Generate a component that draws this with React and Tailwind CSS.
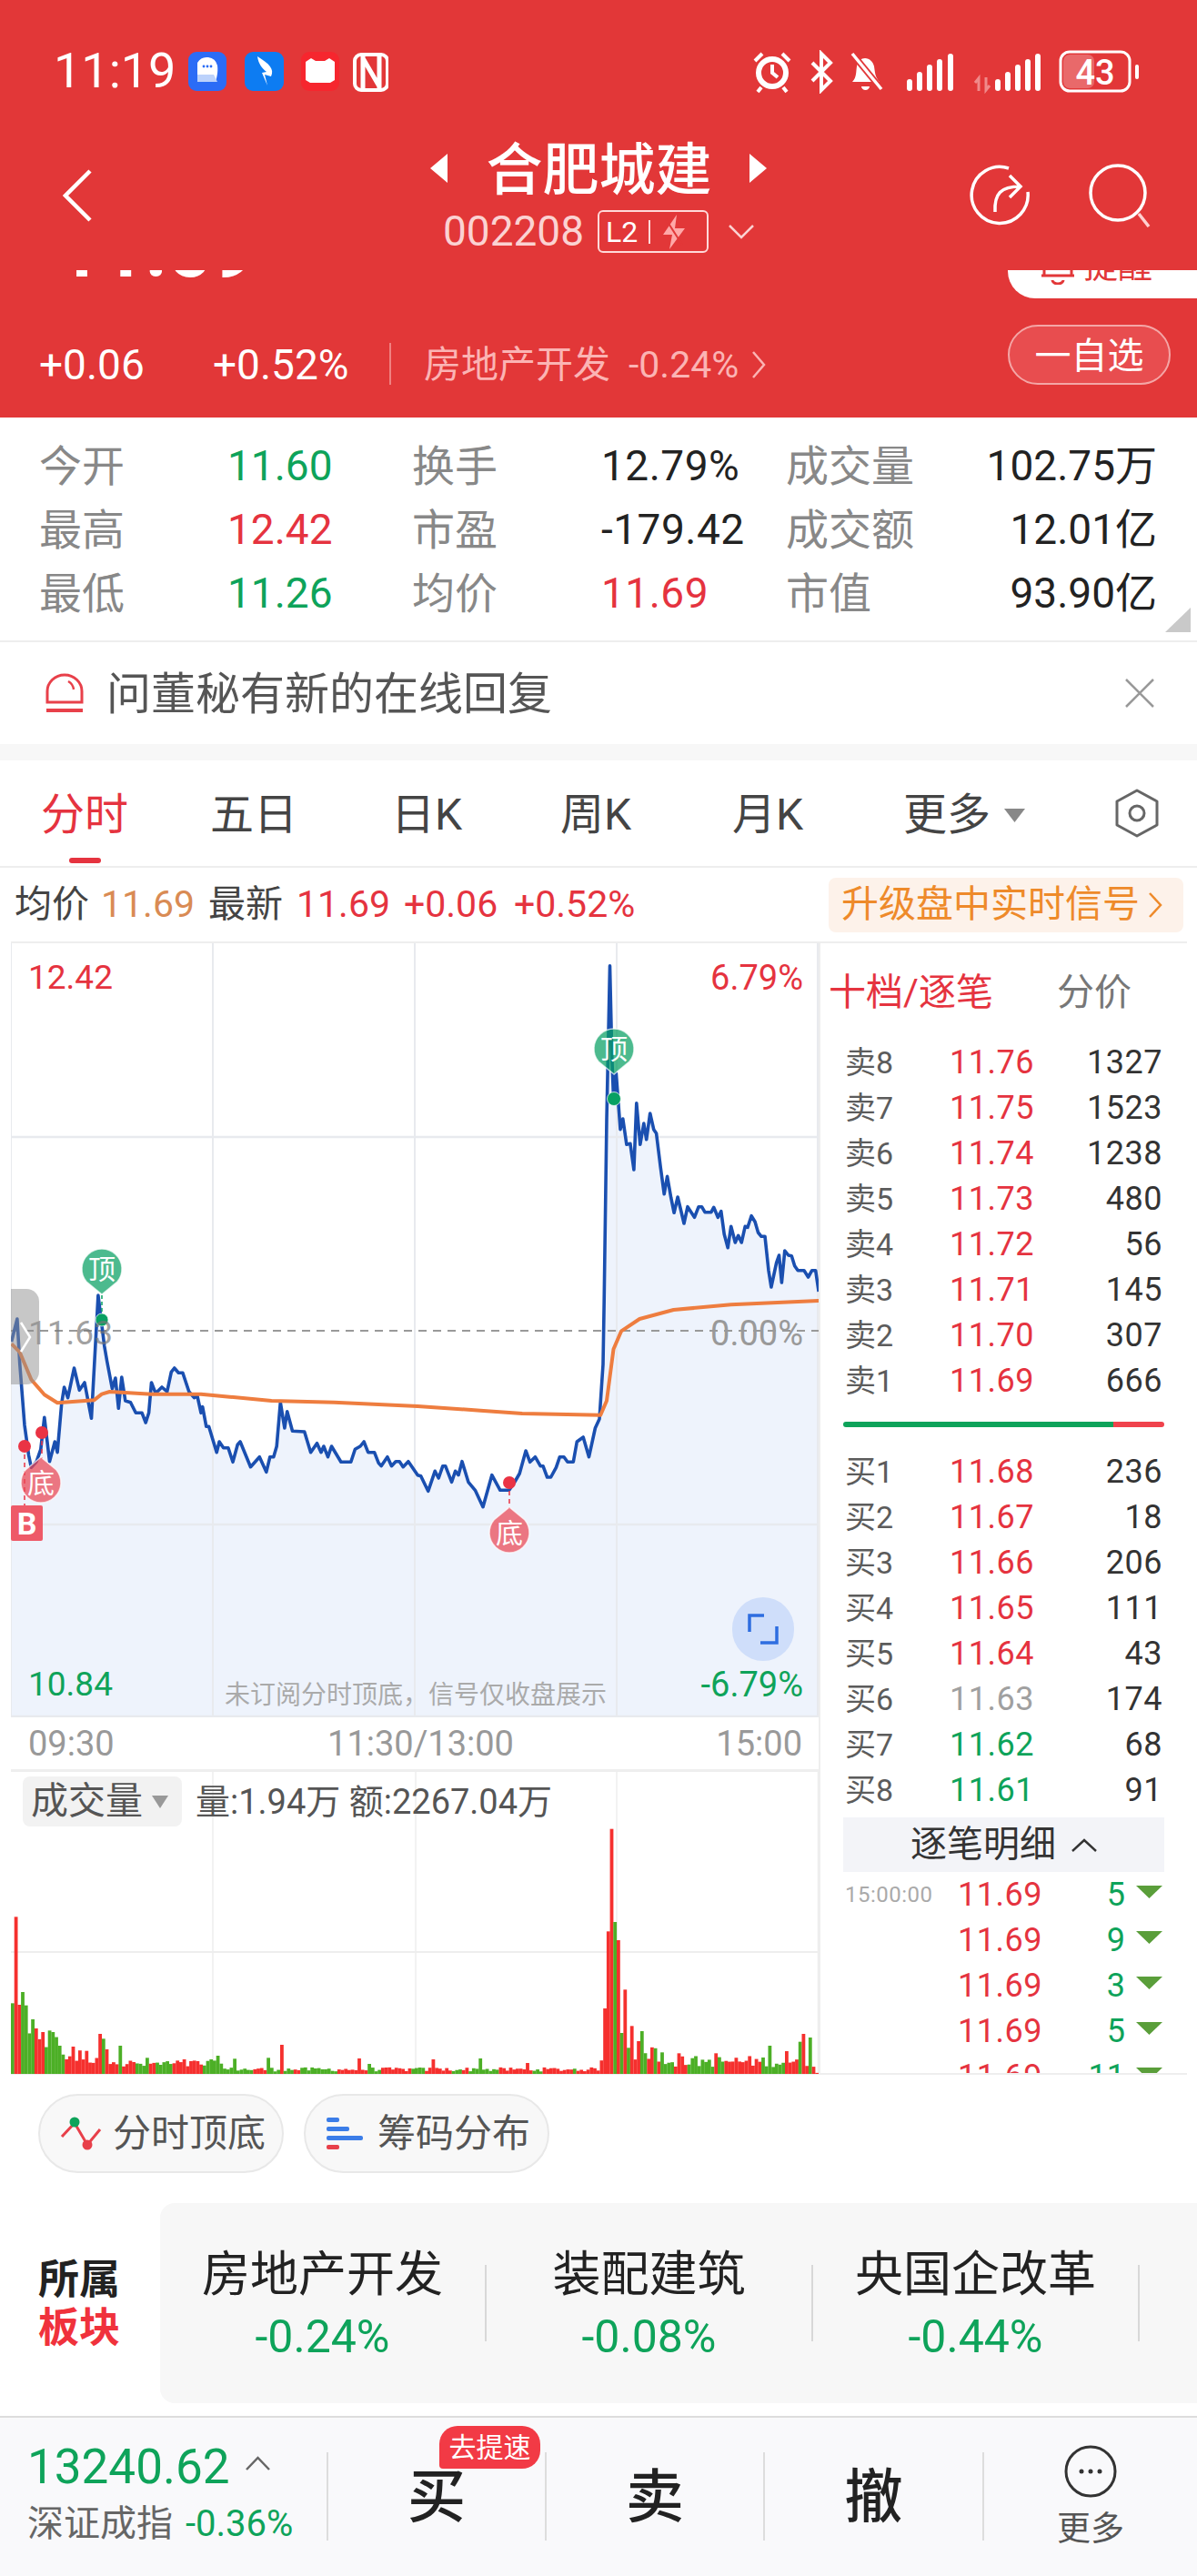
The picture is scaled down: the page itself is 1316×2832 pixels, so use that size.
import React from "react";

const z4 = [[22,225],[33,150],[38,300],[47,500],[55,600],[60,640],[70,620],[78,580],[85,475],[95,620],[105,555],[110,590],[118,430],[123,375],[130,410],[142,312],[152,385],[162,360],[175,478],[188,72],[200,240],[205,290],[215,380],[221,345],[227,445],[233,342],[240,420],[250,425],[260,460],[272,460],[279,492],[285,460],[290,360],[298,395],[310,375],[320,390],[328,325],[334,312],[342,328],[350,328],[362,390],[372,410],[378,405],[385,460],[388,440],[395,505],[400,505],[415,590],[420,555],[428,575],[437,575],[446,622],[455,565],[460,555],[480,638],[497,605],[510,655],[517,605],[524,605],[530,570],[537,425],[545,510],[550,455],[560,520],[583,522],[595,590],[607,560],[615,590],[620,570],[628,605],[635,570],[653,622],[672,622],[680,580],[690,570],[697,555],[705,590],[717,590],[725,625],[730,635],[742,605],[750,635],[758,620],[765,620],[772,638],[782,620],[800,665],[806,668],[820,718],[833,652],[840,675],[848,635],[853,635],[865,688],[872,652],[878,665],[885,620],[897,688],[910,715],[925,770],[942,665],[958,715],[975,715],[985,690],[995,660],[1007,585],[1015,622],[1025,605],[1035,635],[1040,635],[1048,672],[1055,672],[1065,640],[1072,605],[1080,605],[1087,622],[1098,622],[1105,555],[1117,540],[1128,605],[1140,510],[1148,480],[1155,300]];
const z3 = [[1157,1200],[1162,600],[1168,95],[1172,400],[1175,530],[1180,450],[1188,635],[1193,600],[1200,685],[1207,682],[1214,768],[1219,548],[1226,685],[1233,615],[1238,668],[1245,582],[1252,635],[1257,648],[1265,760],[1272,848],[1278,790],[1285,860],[1291,910],[1298,858],[1310,945],[1317,890],[1330,925],[1338,890],[1344,890],[1350,908],[1362,908],[1367,892],[1375,925],[1381,905],[1387,980],[1394,1025],[1400,955],[1408,1008],[1414,985],[1420,1008],[1427,955],[1432,958],[1439,920],[1446,940],[1452,975],[1458,988],[1465,988],[1472,1100],[1477,1155],[1487,1075],[1492,1050],[1497,1140],[1503,1035],[1510,1050],[1516,1052],[1522,1085],[1528,1100],[1540,1100],[1548,1122],[1555,1100],[1562,1100],[1568,1170]];
const avgZ = [[22,232],[38,260],[60,350],[85,400],[110,427],[180,418],[195,398],[210,390],[290,398],[385,398],[440,407],[520,420],[640,425],[800,438],[920,452],[1000,462],[1150,467],[1162,420],[1175,250],[1190,190],[1225,150],[1290,120],[1400,103],[1568,90]];
const fromZ4 = ([x, y]) => [+(x / 1.742).toFixed(1), +(1400 + y / 3).toFixed(1)];
const fromZ3 = ([x, y]) => [+(x / 1.742).toFixed(1), +(1030 + y / 3).toFixed(1)];
const price = [...z4.map(fromZ4), ...z3.map(fromZ3)];
const avg = avgZ.map(fromZ4);
const pts = (a) => a.map((p) => p.join(",")).join(" ");

const peaks = [[20,905,0],[27,620,1],[32,910,1],[40,868,0],[47,912,0],[58,958,0],[65,988,1],[77,1000,1],[92,995,0],[97,1000,0],[110,1045,0],[136,1048,1],[185,1006,1],[193,1022,0],[223,1045,0],[275,1085,0],[345,1090,1],[410,1078,0],[440,1088,0],[505,1085,0],[530,1042,1],[677,1087,1],[695,1105,0],[905,1087,0],[818,1090,1],[995,1102,1],[1143,922,1],[1150,668,1],[1156,330,1],[1162,637,0],[1168,697,1],[1175,1003,0],[1180,860,1],[1187,1052,0],[1194,980,1],[1205,1030,1],[1212,997,0],[1232,1057,1],[1250,1067,0],[1283,1070,1],[1352,1070,1],[1456,1045,0],[1485,1063,1],[1512,1032,0],[1519,1006,1],[1531,1018,0],[1551,888,0]];
function makeBars() {
  let s = 12345;
  const rnd = () => { s = (s * 1103515245 + 12345) & 0x7fffffff; return s / 0x7fffffff; };
  const bars = [];
  let color = 1;
  for (let i = 0; i < 240; i++) {
    const x = 12 + i * 3.7;
    const zx = x * 1.723;
    let env = 18;
    if (zx < 60) env = 190; else if (zx < 120) env = 110; else if (zx < 230) env = 70; else if (zx < 420) env = 40; else if (zx < 1130) env = 18; else if (zx < 1240) env = 90; else if (zx < 1540) env = 50; else env = 4;
    if (rnd() < 0.22) color = 1 - color;
    let h = env * (0.45 + rnd() * 0.75);
    let c = color;
    for (const [px, top, col] of peaks) {
      if (Math.abs(px - zx) < 3.2) { h = Math.max(h, 1138 - top); c = col; }
    }
    bars.push({ x, h: h / 3, c });
  }
  return bars;
}
const bars = makeBars();

const Drop = ({ x, y, up, label }) => {
  const d = up
    ? `M${x} ${y - 28} L${x - 17} ${y - 14} A22 22 0 1 0 ${x + 17} ${y - 14} Z`
    : `M${x} ${y + 28} L${x - 17} ${y + 14} A22 22 0 1 1 ${x + 17} ${y + 14} Z`;
  return (
    <g>
      <path d={d} fill={up ? "#ea4553" : "#07a062"} fillOpacity="0.72" stroke="#ffffff" strokeOpacity="0.7" strokeWidth="1.5" />
      <text x={x} y={y + 11} textAnchor="middle" fontSize="30" fill="#ffffff">{label}</text>
    </g>
  );
};

const sells = [["卖8","11.76","1327"],["卖7","11.75","1523"],["卖6","11.74","1238"],["卖5","11.73","480"],["卖4","11.72","56"],["卖3","11.71","145"],["卖2","11.70","307"],["卖1","11.69","666"]];
const buys = [["买1","11.68","236","text-[#e5333f]"],["买2","11.67","18","text-[#e5333f]"],["买3","11.66","206","text-[#e5333f]"],["买4","11.65","111","text-[#e5333f]"],["买5","11.64","43","text-[#e5333f]"],["买6","11.63","174","text-[#a0a0a0]"],["买7","11.62","68","text-[#0ea35a]"],["买8","11.61","91","text-[#0ea35a]"]];
const ticks = [["15:00:00","5"],["","9"],["","3"],["","5"],["","11"]];

const Level = ({ label, p, q, cls }) => (
  <div className="flex h-[50px] items-center">
    <div className="w-[117px] pl-[2px] text-[34px] text-[#5c5c5c]">{label}</div>
    <div className={`w-[100px] text-[36px] tracking-[0.5px] ${cls}`}>{p}</div>
    <div className="flex-1 pr-[2px] text-right text-[36px] tracking-[0.5px] text-[#333]">{q}</div>
  </div>
);

const StatRow = ({ a, av, ac, b, bv, bc, c, cv }) => (
  <div className="grid h-[70px] grid-cols-[207px_203px_208px_203px_408px] items-center text-[46px] leading-none">
    <div className="text-[47px] text-[#888]">{a}</div>
    <div className={ac}>{av}</div>
    <div className="text-[47px] text-[#888]">{b}</div>
    <div className={`tracking-[0.5px] ${bc}`}>{bv}</div>
    <div className="flex items-center justify-between">
      <span className="text-[47px] text-[#888]">{c}</span>
      <span className="text-[#222]">{cv}</span>
    </div>
  </div>
);

const Sector = ({ name, pct }) => (
  <>
    <div className="flex w-[357px] flex-col items-center pt-[6px]">
      <div className="h-[60px] text-[53px] leading-[60px] text-[#222]">{name}</div>
      <div className="mt-[8px] h-[60px] text-[50px] leading-[60px] text-[#0ea35a]">{pct}</div>
    </div>
    <div className="h-[84px] w-[2px] bg-[#d8d8d8]" />
  </>
);

const Sep = () => <div className="mt-[38px] h-[97px] w-[2px] shrink-0 bg-[#dddddd]" />;

export default function App() {
  return (
    <div className="h-[2832px] w-[1316px] overflow-hidden bg-white font-['Roboto','Noto_Sans_CJK_SC',sans-serif]">
      {/* red header */}
      <div className="h-[459px] bg-[#e23738] text-white">
        <div className="flex h-[150px] items-start pt-[55px]">
          <div className="ml-[59px] h-[46px] w-[148px] text-[54px] leading-[46px]">11:19</div>
          <svg width="220" height="46" viewBox="207 55 220 46" className="shrink-0">
            <rect x="207" y="57" width="42" height="43" rx="9" fill="#2b6cf6" />
            <path d="M217 69 a12 12 0 0 1 22 3 c1 8 -1 14 -2 18 h-20 z" fill="#ffffff" />
            <path d="M217 82 h18 l4 8 h-22 z" fill="#bcd2fb" />
            <circle cx="224" cy="73" r="1.4" fill="#2b6cf6" /><circle cx="228" cy="73" r="1.4" fill="#2b6cf6" /><circle cx="232" cy="73" r="1.4" fill="#2b6cf6" />
            <rect x="269" y="57" width="43" height="43" rx="9" fill="#0d7cf2" />
            <path d="M283 62 C296 70 302 76 298 84 L291 82 L294 94 L288 80 L293 79 C288 75 284 70 283 62 Z" fill="#ffffff" />
            <rect x="331" y="57" width="42" height="43" rx="9" fill="#f6262e" />
            <path d="M336 68 l6 -4 l5 3 h10 l5 -3 l6 4 v20 l-5 3 h-22 l-5 -3 z" fill="#ffffff" />
            <rect x="390" y="60" width="36" height="39" rx="7" fill="none" stroke="#ffffff" strokeWidth="4" />
            <path d="M399 62 v35 M417 62 v35 M399 64 L417 95" stroke="#ffffff" strokeWidth="5" fill="none" />
          </svg>
          <svg width="426" height="48" viewBox="826 54 426 48" className="ml-[400px] shrink-0">
            <circle cx="848" cy="79" r="15" fill="none" stroke="#ffffff" strokeWidth="6" />
            <path d="M829 66 l8 -8 M867 66 l-8 -8 M836 95 l-4 5 M860 95 l4 5 M848 70 v9 l6 5" stroke="#ffffff" strokeWidth="4" fill="none" />
            <path d="M892 68 L912 88 L902 98 V58 L912 68 L892 88" stroke="#ffffff" strokeWidth="4" fill="none" />
            <path d="M936 89 c5 -5 4 -12 5 -17 c1 -6 5 -9 9 -9 c5 0 9 4 10 9 c1 6 1 12 6 17 z" fill="#ffffff" />
            <path d="M936 58 L968 97" stroke="#e23738" strokeWidth="7" /><path d="M936 58 L968 97" stroke="#ffffff" strokeWidth="3.5" />
            <path d="M946 94 h9 a4.5 4 0 0 1 -9 0z" fill="#ffffff" />
            {[[999,86],[1010,78],[1021,70],[1032,64],[1044,58]].map(([x, y]) => <rect key={x} x={x - 3} y={y} width="6" height={99 - y} rx="3" fill="#ffffff" />)}
            {[[1096,86],[1107,78],[1118,70],[1129,64],[1140,58]].map(([x, y]) => <rect key={x} x={x - 3} y={y} width="6" height={99 - y} rx="3" fill="#ffffff" />)}
            <path d="M1075 99 v-14 l-4 5 M1083 84 v14 l4 -5" stroke="#f08a8a" strokeWidth="3" fill="none" />
            <rect x="1165" y="56" width="76" height="43" rx="10" fill="none" stroke="#ffffff" strokeWidth="3" />
            <rect x="1168" y="59" width="34" height="37" rx="7" fill="#ffffff" fillOpacity="0.25" />
            <text x="1203" y="92" textAnchor="middle" fontSize="38" fontWeight="500" fill="#ffffff">43</text>
            <rect x="1247" y="70" width="4" height="16" rx="2" fill="#ffffff" />
          </svg>
        </div>
        <div className="flex h-[130px] items-start">
          <div className="w-[300px] shrink-0 pl-[69px] pt-[36px]">
            <svg width="32" height="58" viewBox="0 0 32 58"><path d="M30 2 L3 29 L30 56" fill="none" stroke="#ffffff" strokeWidth="4.5" /></svg>
          </div>
          <div className="flex flex-1 flex-col items-center pt-[7px]">
            <div className="flex h-[56px] items-center">
              <svg width="20" height="32" viewBox="0 0 20 32" className="mr-[41px]"><path d="M19 0 L0 16 L19 32 Z" fill="#ffffff" /></svg>
              <div className="pt-[5px] text-[62px] font-medium leading-[56px]">合肥城建</div>
              <svg width="20" height="32" viewBox="0 0 20 32" className="ml-[40px]"><path d="M1 0 L20 16 L1 32 Z" fill="#ffffff" /></svg>
            </div>
            <div className="mt-[18px] flex h-[47px] items-center">
              <div className="text-[46px] leading-[47px] text-[#fbd2d2]">002208</div>
              <div className="ml-[15px] flex h-[47px] w-[122px] items-center rounded-[6px] border-2 border-[#ffd9d9] pl-[7px]">
                <span className="text-[32px] leading-none">L2</span>
                <span className="ml-[12px] h-[26px] w-[2px] bg-[#ffd9d9]" />
                <svg width="28" height="40" viewBox="0 0 28 40" className="ml-[12px]"><path d="M17 1 L2 23 H12 L9 39 L26 16 H15 Z" fill="#ffa8a8" /><path d="M5 6 L23 34" stroke="#e23738" strokeWidth="2" /></svg>
              </div>
              <svg width="28" height="16" viewBox="0 0 28 16" className="ml-[22px]"><path d="M1 1 L14 14 L27 1" fill="none" stroke="#fbd2d2" strokeWidth="2.5" /></svg>
            </div>
          </div>
          <div className="flex w-[300px] shrink-0 pl-[49px] pt-[30px]">
            <svg width="68" height="68" viewBox="1065 181 68 68" className="shrink-0">
              <path d="M1109 186 A31 31 0 1 0 1130 212" fill="none" stroke="#ffffff" strokeWidth="3.5" />
              <path d="M1094 234 C1093 214 1100 206 1122 206 M1110 194 L1122 206 L1110 218" fill="none" stroke="#ffffff" strokeWidth="3.5" />
            </svg>
            <svg width="68" height="70" viewBox="1197 179 68 70" className="ml-[64px] shrink-0">
              <circle cx="1229" cy="211" r="30" fill="none" stroke="#ffffff" strokeWidth="3.5" />
              <path d="M1252 234 L1263 248" stroke="#ffd0d0" strokeWidth="3.5" />
            </svg>
          </div>
        </div>
        <div className="mt-[17px] flex h-[31px] items-start justify-between pl-[63px]">
          <div className="h-[11px] overflow-hidden">
            <div className="-mt-[63px] text-[84px] font-bold leading-[84px] text-white">11.69</div>
          </div>
          <div className="flex h-[31px] w-[208px] justify-end overflow-hidden rounded-bl-[30px] bg-white pr-[49px] text-[#e23738]">
            <svg width="36" height="16" viewBox="0 0 36 16" className="mr-[10px]"><path d="M3 0 v6 H33 V0 M0 6 H36 M12 11 a6 4 0 0 0 12 0" fill="none" stroke="#e23738" strokeWidth="3" /></svg>
            <div className="-mt-[24px] text-[38px] leading-[38px]">提醒</div>
          </div>
        </div>
        <div className="mt-[29px] flex h-[66px] items-start">
          <div className="ml-[43px] mt-[21px] flex h-[46px] w-[191px] items-center text-[46px] leading-none">+0.06</div>
          <div className="mt-[21px] flex h-[46px] w-[194px] items-center text-[46px] leading-none">+0.52%</div>
          <div className="mt-[20px] h-[46px] w-[2px] bg-[#f08080]" />
          <div className="ml-[36px] mt-[21px] flex h-[46px] items-center text-[41px] leading-none text-[#fbb4b4]">
            房地产开发
            <span className="ml-[20px] text-[41px]">-0.24%</span>
            <svg width="16" height="32" viewBox="0 0 16 32" className="ml-[14px]"><path d="M2 2 L14 16 L2 30" fill="none" stroke="#fbb4b4" strokeWidth="2.5" /></svg>
          </div>
          <div className="ml-auto mr-[29px] flex h-[66px] w-[179px] items-center justify-center rounded-full border-2 border-[#f4a6a6] bg-[#e84d4f] pt-[4px] text-[40px] leading-none">一自选</div>
        </div>
      </div>

      {/* stats */}
      <div className="relative h-[247px] border-b-2 border-[#eeeeee] pl-[43px] pt-[18px]">
        <StatRow a="今开" av="11.60" ac="text-[#0ea35a]" b="换手" bv="12.79%" bc="text-[#222]" c="成交量" cv="102.75万" />
        <StatRow a="最高" av="12.42" ac="text-[#e5333f]" b="市盈" bv="-179.42" bc="text-[#222]" c="成交额" cv="12.01亿" />
        <StatRow a="最低" av="11.26" ac="text-[#0ea35a]" b="均价" bv="11.69" bc="text-[#e5333f]" c="市值" cv="93.90亿" />
        <svg width="28" height="27" viewBox="0 0 28 27" className="absolute bottom-[9px] right-[7px]"><path d="M28 0 V27 H0 Z" fill="#c9c9c9" /></svg>
      </div>

      {/* notification */}
      <div className="flex h-[112px] items-center pl-[49px]">
        <svg width="44" height="44" viewBox="0 0 44 44" className="shrink-0">
          <path d="M3 32 V20 A19 18 0 0 1 41 20 V32 Z" fill="none" stroke="#e8404a" strokeWidth="3" />
          <path d="M2 41 H42" stroke="#e8404a" strokeWidth="4" /><path d="M26 9 A12 12 0 0 1 32 18" fill="none" stroke="#e8404a" strokeWidth="2.5" />
        </svg>
        <div className="ml-[24px] pt-[2px] text-[49px] leading-none text-[#555]">问董秘有新的在线回复</div>
        <svg width="32" height="32" viewBox="0 0 32 32" className="ml-auto mr-[47px]"><path d="M1 1 L31 31 M31 1 L1 31" stroke="#999" strokeWidth="2.5" /></svg>
      </div>
      <div className="h-[18px] bg-[#f7f7f7]" />

      {/* tabs */}
      <div className="flex h-[118px] items-center border-b-2 border-[#eeeeee] pl-[45px] pt-[4px] text-[48px] leading-none text-[#444]">
        <div className="relative h-[48px] w-[186px] text-[#e5333f]">分时<span className="absolute left-[31px] top-[71px] h-[6px] w-[35px] rounded-[3px] bg-[#e5333f]" /></div>
        <div className="w-[199px]">五日</div>
        <div className="w-[186px]">日K</div>
        <div className="w-[189px]">周K</div>
        <div className="w-[188px]">月K</div>
        <div>更多</div>
        <svg width="23" height="15" viewBox="0 0 23 15" className="ml-[15px]"><path d="M0 0 H23 L11.5 15 Z" fill="#888" /></svg>
        <svg width="50" height="54" viewBox="0 0 50 54" className="-mt-[4px] ml-[98px]">
          <path d="M25 2 L47 14 V40 L25 52 L3 40 V14 Z" fill="none" stroke="#666" strokeWidth="3" strokeLinejoin="round" />
          <circle cx="25" cy="27" r="8" fill="none" stroke="#666" strokeWidth="3" />
        </svg>
      </div>

      {/* info row */}
      <div className="flex h-[81px] items-center pl-[16px] pr-[15px] text-[41px] leading-none">
        <span className="text-[#444]">均价</span>
        <span className="ml-[13px] w-[118px] text-[#d98b54]">11.69</span>
        <span className="text-[#444]">最新</span>
        <span className="ml-[15px] w-[118px] text-[#e5333f]">11.69</span>
        <span className="w-[121px] text-[#e5333f]">+0.06</span>
        <span className="text-[#e5333f]">+0.52%</span>
        <div className="ml-auto flex h-[60px] w-[390px] items-center rounded-[8px] bg-[#fdf2ea] pl-[14px] text-[41px] text-[#ee8a2a]">
          升级盘中实时信号
          <svg width="16" height="30" viewBox="0 0 16 30" className="ml-[9px]"><path d="M2 2 L14 15 L2 28" fill="none" stroke="#ee8a2a" strokeWidth="2.5" /></svg>
        </div>
      </div>

      {/* chart area */}
      <div className="mx-[12px] flex h-[1246px] w-[1293px] border-y-2 border-[#eeeeee]">
        <div className="flex w-[888px] shrink-0 flex-col">
          <div className="relative h-[851px]">
            <svg width="888" height="851" viewBox="12 1037 888 851" className="absolute left-0 top-0">
              <polygon points={`12,1888 ${pts(price)} 900,1888`} fill="#eef3fc" />
              {[12, 234, 456, 678, 899].map((x) => <line key={x} x1={x} x2={x} y1="1037" y2="1888" stroke="#e8eaee" strokeWidth="2" />)}
              {[1250, 1676, 1887].map((y) => <line key={y} x1="12" x2="900" y1={y} y2={y} stroke="#e8eaee" strokeWidth="2.5" />)}
              <line x1="12" x2="900" y1="1463" y2="1463" stroke="#999" strokeWidth="2" strokeDasharray="9 7" />
              <polyline points={pts(price)} fill="none" stroke="#1a4fb0" strokeWidth="3.6" strokeLinejoin="round" />
              <polyline points={pts(avg)} fill="none" stroke="#ee7d3f" strokeWidth="4" strokeLinejoin="round" />
              <line x1="112" x2="112" y1="1424" y2="1451" stroke="#07a062" strokeWidth="1.5" strokeDasharray="4 3" />
              <circle cx="112" cy="1451" r="7" fill="#07a062" stroke="#ffffff" strokeOpacity="0.7" />
              <circle cx="675" cy="1208" r="7.5" fill="#07a062" stroke="#ffffff" strokeOpacity="0.7" />
              <line x1="27" x2="27" y1="1590" y2="1660" stroke="#ea3344" strokeWidth="1.5" strokeDasharray="5 4" />
              <line x1="46" x2="46" y1="1575" y2="1604" stroke="#ea3344" strokeWidth="1.5" strokeDasharray="5 4" />
              <line x1="560" x2="560" y1="1630" y2="1658" stroke="#ea3344" strokeWidth="1.5" strokeDasharray="5 4" />
              <circle cx="27" cy="1590" r="7" fill="#ea3344" />
              <circle cx="46" cy="1575" r="7" fill="#ea3344" />
              <circle cx="560" cy="1630" r="7" fill="#ea3344" />
              <Drop x={675} y={1153} label="顶" />
              <Drop x={112} y={1395} label="顶" />
              <Drop x={45} y={1630} up label="底" />
              <Drop x={560} y={1685} up label="底" />
            </svg>
            <div className="absolute left-[19px] top-[20px] text-[37px] leading-[36px] text-[#e5333f]">12.42</div>
            <div className="absolute right-[17px] top-[20px] text-[38px] leading-[36px] text-[#e5333f]">6.79%</div>
            <div className="absolute left-[19px] top-[411px] text-[37px] leading-[36px] text-[#777]/70">11.63</div>
            <div className="absolute right-[17px] top-[411px] text-[38px] leading-[36px] text-[#999]">0.00%</div>
            <div className="absolute bottom-[18px] left-[19px] text-[37px] leading-[36px] text-[#0ea35a]">10.84</div>
            <div className="absolute bottom-[18px] right-[17px] text-[38px] leading-[36px] text-[#0ea35a]">-6.79%</div>
            <div className="absolute bottom-[9px] left-[235px] text-[28px] leading-[30px] text-[#aaaaaa]">未订阅分时顶底，信号仅收盘展示</div>
            <div className="absolute left-0 top-[380px] flex h-[105px] w-[31px] items-center justify-center rounded-r-[14px] bg-[#8f8f8f]/50">
              <svg width="14" height="34" viewBox="0 0 14 34"><path d="M2 1 L12 17 L2 33" fill="none" stroke="#ffffff" strokeWidth="2.5" /></svg>
            </div>
            <div className="absolute left-0 top-[618px] flex h-[39px] w-[35px] items-center justify-center rounded-[2px] bg-[#ee5a68] text-[34px] font-bold leading-none text-white">B</div>
            <div className="absolute left-[793px] top-[719px] flex h-[70px] w-[68px] items-center justify-center rounded-full bg-[#cfdefa]">
              <svg width="34" height="34" viewBox="0 0 34 34"><path d="M2 20 V2 H18 M32 14 V32 H14" fill="none" stroke="#2e6de0" strokeWidth="3.5" /></svg>
            </div>
          </div>
          <div className="flex h-[57px] items-center justify-between pl-[19px] pr-[18px] text-[38px] leading-none text-[#999]">
            <span>09:30</span><span className="ml-[12px]">11:30/13:00</span><span>15:00</span>
          </div>
          <div className="relative flex-1 border-t-[3px] border-[#eeeeee]">
            <svg width="888" height="332" viewBox="12 1947 888 332" className="absolute left-0 top-0">
              {[234, 457, 678, 899.5].map((x) => <line key={x} x1={x} x2={x} y1="1947" y2="2279" stroke="#eeeeee" strokeWidth="1.5" />)}
              <line x1="12" x2="900" y1="2145" y2="2145" stroke="#eeeeee" strokeWidth="2" />
              {bars.map((b) => <rect key={b.x} x={b.x} y={2279 - b.h} width="3.8" height={b.h} fill={b.c ? "#f5302e" : "#4caf26"} />)}
            </svg>
            <div className="absolute left-[13px] top-[5px] flex h-[55px] w-[175px] items-center rounded-[8px] bg-[#f2f2f2] pl-[9px] text-[41px] leading-none text-[#555]">
              成交量
              <svg width="18" height="14" viewBox="0 0 18 14" className="ml-[10px]"><path d="M0 0 H18 L9 14 Z" fill="#999" /></svg>
            </div>
            <div className="absolute left-[203px] top-[15px] whitespace-nowrap text-[38px] leading-[37px] text-[#555]">量:1.94万 额:2267.04万</div>
          </div>
        </div>

        <div className="flex min-w-0 flex-1 flex-col border-l-2 border-[#eeeeee] pl-[25px] pr-[25px]">
          <div className="-ml-[16px] flex h-[106px] items-center pt-[3px] text-[41px] leading-none">
            <span className="text-[#e5333f]">十档/逐笔</span>
            <span className="ml-[70px] text-[#777]">分价</span>
          </div>
          {sells.map(([l, p, q]) => <Level key={l} label={l} p={p} q={q} cls="text-[#e5333f]" />)}
          <div className="mt-[20px] flex h-[6px] overflow-hidden rounded-[3px]">
            <div className="w-[297px] bg-[#0ea35a]" />
            <div className="flex-1 bg-[#f0424c]" />
          </div>
          <div className="h-[24px] shrink-0" />
          {buys.map(([l, p, q, c]) => <Level key={l} label={l} p={p} q={q} cls={c} />)}
          <div className="mt-[5px] flex h-[60px] shrink-0 items-center justify-center bg-[#f3f4f8] text-[40px] leading-none text-[#333]">
            逐笔明细
            <svg width="28" height="15" viewBox="0 0 28 15" className="ml-[17px]"><path d="M1 14 L14 2 L27 14" fill="none" stroke="#333" strokeWidth="2.5" /></svg>
          </div>
          <div className="min-h-0 flex-1 overflow-hidden">
            {ticks.map(([t, n], i) => (
              <div key={i} className="flex h-[50px] items-center">
                <div className="w-[126px] pl-[2px] text-[24px] tracking-[0.5px] text-[#aaa]">{t}</div>
                <div className="w-[90px] text-[36px] tracking-[0.5px] text-[#e5333f]">11.69</div>
                <div className="flex-1 text-right text-[36px] text-[#0ea35a]">{n}</div>
                <svg width="29" height="14" viewBox="0 0 29 14" className="ml-[12px] mr-[2px] -mt-[6px]"><path d="M0 0 H29 L14.5 14 Z" fill="#5a9e3a" /></svg>
              </div>
            ))}
          </div>
        </div>
      </div>

      {/* chips */}
      <div className="flex pl-[42px] pt-[21px]">
        <div className="flex h-[87px] w-[270px] items-center rounded-full border-2 border-[#e8e8e8] bg-[#f8f8f8] pl-[22px] text-[42px] leading-none text-[#555]">
          <svg width="46" height="38" viewBox="0 0 46 38" className="shrink-0">
            <path d="M2 22 L16 7 L30 31 L44 14" fill="none" stroke="#e8404a" strokeWidth="3" />
            <circle cx="16" cy="6" r="5.5" fill="#0ea35a" /><circle cx="30" cy="31" r="5.5" fill="#e8404a" />
          </svg>
          <span className="ml-[12px]">分时顶底</span>
        </div>
        <div className="ml-[22px] flex h-[87px] w-[270px] items-center rounded-full border-2 border-[#e8e8e8] bg-[#f8f8f8] pl-[23px] text-[42px] leading-none text-[#555]">
          <svg width="42" height="36" viewBox="0 0 42 36" className="shrink-0">
            <rect x="0" y="0" width="14" height="5" rx="2" fill="#3b7de8" /><rect x="0" y="10" width="25" height="5" rx="2" fill="#3b7de8" />
            <rect x="0" y="20" width="40" height="5" rx="2" fill="#3b7de8" /><rect x="0" y="30" width="14" height="5" rx="2" fill="#e8404a" />
          </svg>
          <span className="ml-[14px]">筹码分布</span>
        </div>
      </div>

      {/* sectors */}
      <div className="mt-[33px] flex h-[220px] pl-[42px]">
        <div className="flex w-[134px] shrink-0 flex-col justify-center pt-[2px] text-[45px] font-bold leading-[53px]">
          <span className="text-[#222]">所属</span>
          <span className="text-[#f0323c]">板块</span>
        </div>
        <div className="flex flex-1 items-center rounded-l-[16px] bg-[#f7f7f7]">
          <Sector name="房地产开发" pct="-0.24%" />
          <Sector name="装配建筑" pct="-0.08%" />
          <Sector name="央国企改革" pct="-0.44%" />
        </div>
      </div>

      {/* footer */}
      <div className="mt-[14px] flex h-[176px] items-start border-t-2 border-[#dddddd] bg-[#f9f9fb]">
        <div className="w-[359px] shrink-0 pl-[30px] pt-[24px]">
          <div className="flex h-[60px] items-center text-[53px] leading-none text-[#0ea35a]">
            13240.62
            <svg width="27" height="16" viewBox="0 0 27 16" className="ml-[18px] -mt-[8px]"><path d="M1 15 L13.5 2 L26 15" fill="none" stroke="#666" strokeWidth="2.5" /></svg>
          </div>
          <div className="mt-[11px] flex h-[44px] items-center text-[40px] leading-none text-[#666]">
            深证成指
            <span className="ml-[14px] text-[40px] text-[#0ea35a]">-0.36%</span>
          </div>
        </div>
        <Sep />
        <div className="relative flex h-full w-[238px] justify-center pt-[50px] text-[64px] font-medium leading-[76px] text-[#222]">
          买
          <div className="absolute left-[122px] top-[9px] flex h-[47px] w-[111px] items-center justify-center rounded-[20px] rounded-bl-[4px] bg-[#f23a45] text-[30px] font-normal leading-none text-white">去提速</div>
        </div>
        <Sep />
        <div className="flex h-full w-[238px] justify-center pt-[50px] text-[64px] font-medium leading-[76px] text-[#222]">卖</div>
        <Sep />
        <div className="flex h-full w-[239px] justify-center pt-[50px] text-[64px] font-medium leading-[76px] text-[#222]">撤</div>
        <Sep />
        <div className="flex flex-1 flex-col items-center pt-[30px]">
          <svg width="58" height="58" viewBox="0 0 58 58">
            <circle cx="29" cy="29" r="27" fill="none" stroke="#333" strokeWidth="3" />
            <circle cx="19" cy="29" r="2.5" fill="#333" /><circle cx="29" cy="29" r="2.5" fill="#333" /><circle cx="39" cy="29" r="2.5" fill="#333" />
          </svg>
          <div className="mt-[16px] text-[37px] leading-none text-[#555]">更多</div>
        </div>
      </div>
    </div>
  );
}
